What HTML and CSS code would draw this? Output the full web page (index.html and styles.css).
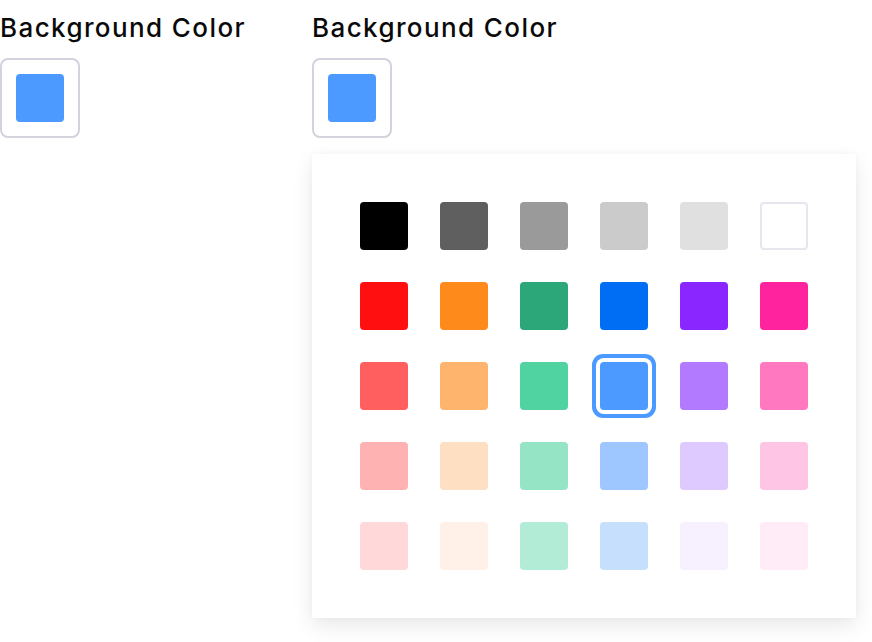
FILE: index.html
```html
<!DOCTYPE html>
<html>
<head>
<meta charset="utf-8">
<link rel="stylesheet" href="styles.css">
</head>
<body>
<div class="page">
  <div class="field">
    <div class="label">Background Color</div>
    <button class="trigger"><span class="chip" style="background:#4c9aff"></span></button>
  </div>
  <div class="field">
    <div class="label">Background Color</div>
    <button class="trigger"><span class="chip" style="background:#4c9aff"></span></button>
    <div class="popover">
      <div class="grid">
        <span class="sw" style="background:#000000"></span>
        <span class="sw" style="background:#5f5f5f"></span>
        <span class="sw" style="background:#9a9a9a"></span>
        <span class="sw" style="background:#cbcbcb"></span>
        <span class="sw" style="background:#e0e0e0"></span>
        <span class="sw sw-white" style="background:#ffffff"></span>

        <span class="sw" style="background:#ff0f0f"></span>
        <span class="sw" style="background:#ff8a1c"></span>
        <span class="sw" style="background:#2ca77a"></span>
        <span class="sw" style="background:#006df5"></span>
        <span class="sw" style="background:#8a26ff"></span>
        <span class="sw" style="background:#ff249e"></span>

        <span class="sw" style="background:#ff5f5f"></span>
        <span class="sw" style="background:#ffb46e"></span>
        <span class="sw" style="background:#50d3a0"></span>
        <span class="sw sw-selected" style="background:#4c9aff"></span>
        <span class="sw" style="background:#b17aff"></span>
        <span class="sw" style="background:#ff78c0"></span>

        <span class="sw" style="background:#ffb2b2"></span>
        <span class="sw" style="background:#ffdfc2"></span>
        <span class="sw" style="background:#96e4c6"></span>
        <span class="sw" style="background:#9fc7ff"></span>
        <span class="sw" style="background:#dfcaff"></span>
        <span class="sw" style="background:#ffc5e4"></span>

        <span class="sw" style="background:#ffd9d9"></span>
        <span class="sw" style="background:#fff1e7"></span>
        <span class="sw" style="background:#b3ecd6"></span>
        <span class="sw" style="background:#c6dffc"></span>
        <span class="sw" style="background:#f6f0ff"></span>
        <span class="sw" style="background:#ffecf6"></span>
      </div>
    </div>
  </div>
</div>
</body>
</html>
```

FILE: styles.css
```css
html, body {
  margin: 0;
  padding: 0;
  background: #ffffff;
}

body {
  font-family: Inter, "Noto Sans", "Liberation Sans", sans-serif;
  color: #0a0a0a;
}

.page {
  display: flex;
  flex-direction: row;
  min-height: 642px;
  box-sizing: border-box;
}

.field {
  width: 312px;
  display: flex;
  flex-direction: column;
  align-items: flex-start;
}

.label {
  font-size: 26px;
  font-weight: 500;
  line-height: 32px;
  margin-top: 12px;
  margin-bottom: 14px;
  white-space: nowrap;
  letter-spacing: 1.4px;
}

.trigger {
  width: 80px;
  height: 80px;
  box-sizing: border-box;
  border: 2px solid #d3d3de;
  border-radius: 8px;
  background: #ffffff;
  padding: 14px;
  margin: 0;
  display: flex;
  align-items: center;
  justify-content: center;
}

.chip {
  display: block;
  width: 48px;
  height: 48px;
  border-radius: 4px;
}

.popover {
  margin-top: 16px;
  width: 544px;
  box-sizing: border-box;
  padding: 48px;
  background: #ffffff;
  box-shadow: 0 8px 20px rgba(0, 0, 0, 0.09), 0 0 6px rgba(0, 0, 0, 0.03);
}

.grid {
  display: grid;
  grid-template-columns: repeat(6, 48px);
  grid-auto-rows: 48px;
  gap: 32px;
}

.sw {
  display: block;
  width: 48px;
  height: 48px;
  border-radius: 4px;
  box-sizing: border-box;
}

.sw-white {
  border: 2px solid #e6e6ee;
}

.sw-selected {
  box-shadow: 0 0 0 4px #ffffff, 0 0 0 8px #4c9aff;
}
```
